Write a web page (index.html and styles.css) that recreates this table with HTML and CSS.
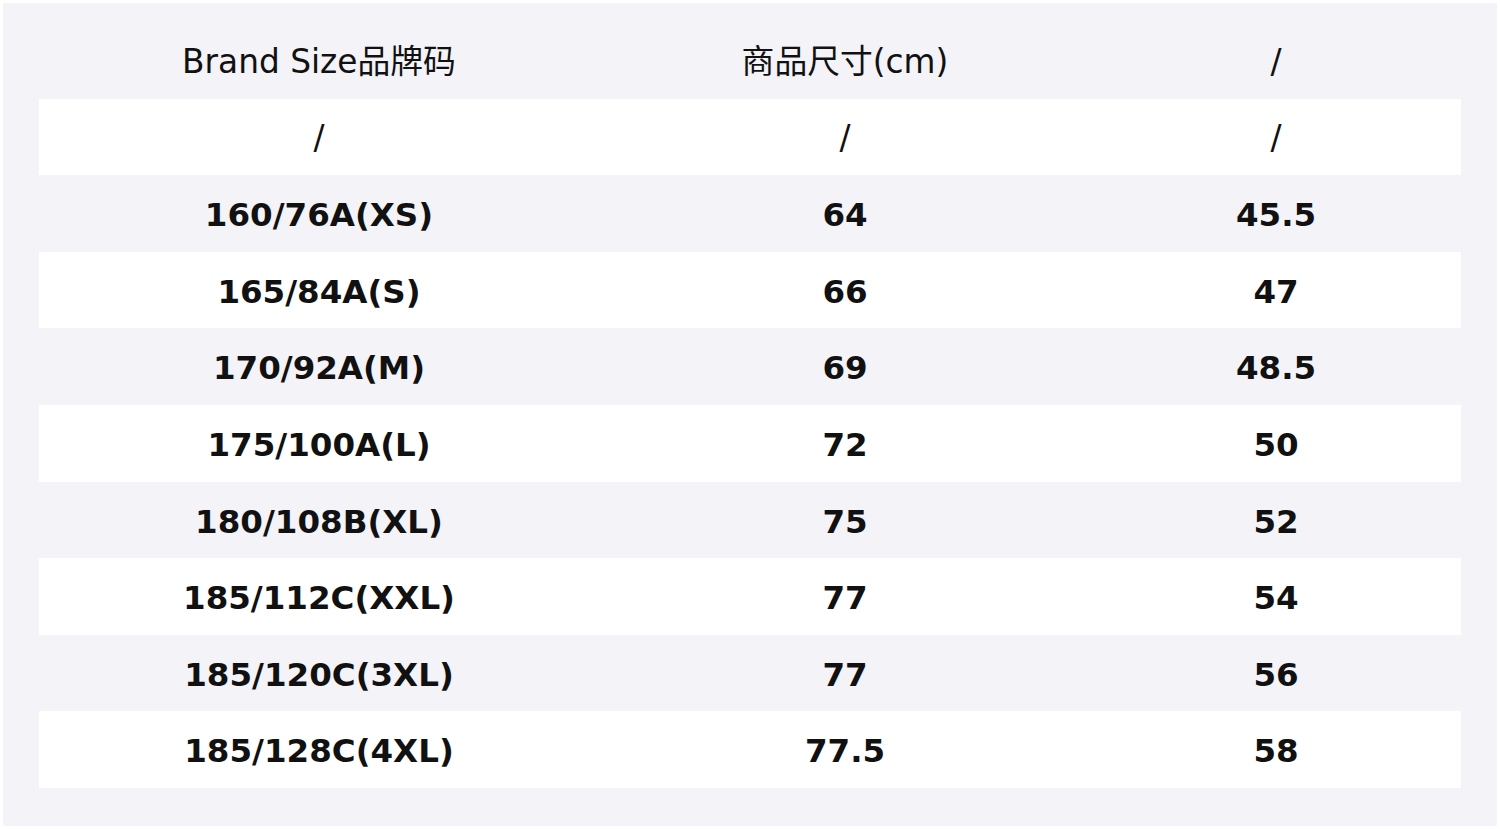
FILE: index.html
```html
<!DOCTYPE html>
<html>
<head>
<meta charset="utf-8">
<link rel="stylesheet" href="styles.css">
</head>
<body>
<div class="frame">
  <div class="table">
    <div class="row head"><div>Brand Size品牌码</div><div>商品尺寸(cm)</div><div>/</div></div>
    <div class="row head alt"><div>/</div><div>/</div><div>/</div></div>
    <div class="row"><div>160/76A(XS)</div><div>64</div><div>45.5</div></div>
    <div class="row alt"><div>165/84A(S)</div><div>66</div><div>47</div></div>
    <div class="row"><div>170/92A(M)</div><div>69</div><div>48.5</div></div>
    <div class="row alt"><div>175/100A(L)</div><div>72</div><div>50</div></div>
    <div class="row"><div>180/108B(XL)</div><div>75</div><div>52</div></div>
    <div class="row alt"><div>185/112C(XXL)</div><div>77</div><div>54</div></div>
    <div class="row"><div>185/120C(3XL)</div><div>77</div><div>56</div></div>
    <div class="row alt"><div>185/128C(4XL)</div><div>77.5</div><div>58</div></div>
  </div>
</div>
</body>
</html>
```

FILE: styles.css
```css
html, body {
  margin: 0;
  padding: 0;
  background: #ffffff;
}
body {
  width: 1500px;
  height: 829px;
  padding: 3px;
  box-sizing: border-box;
}
.frame {
  background: #f4f3f8;
  height: 823px;
  padding: 19px 36px 0 36px;
  box-sizing: border-box;
  border-radius: 2px;
}
.table {
  display: flex;
  flex-direction: column;
}
.row {
  display: grid;
  grid-template-columns: 560px 492px 370px;
  height: 76.6px;
  align-items: center;
  font-family: "DejaVu Sans", "Noto Sans CJK SC", sans-serif;
  font-size: 32.5px;
  font-weight: bold;
  color: #111111;
}
.row > div {
  text-align: center;
  line-height: 1;
  padding-top: 4px;
}
.row.head {
  font-weight: normal;
  font-size: 32.8px;
}
.row.alt {
  background: #ffffff;
}
```
